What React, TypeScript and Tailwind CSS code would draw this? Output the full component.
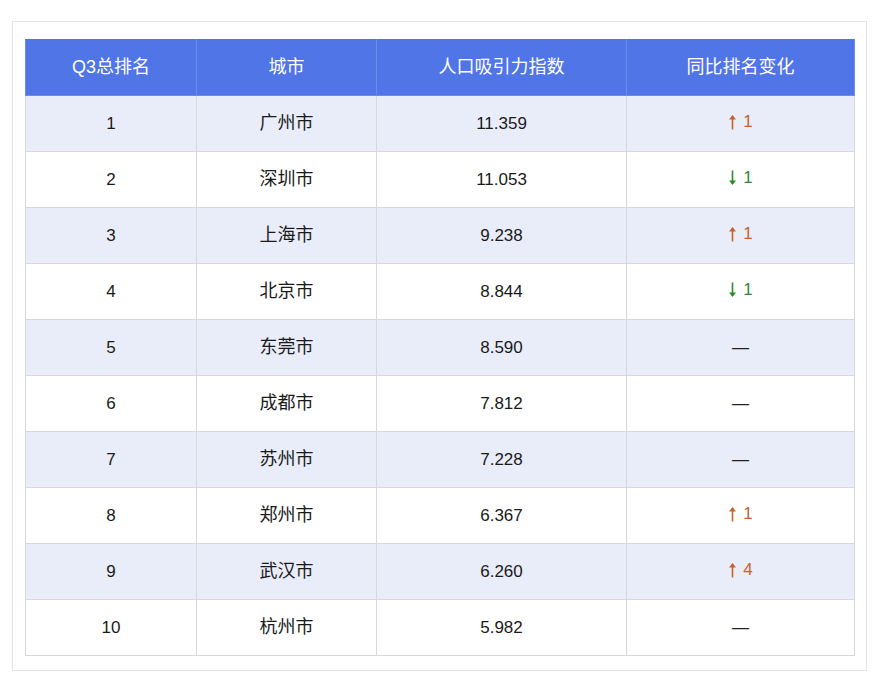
import React from 'react';

interface Row {
  rank: number;
  city: string;
  index: string;
  change: 'up' | 'down' | 'none';
  delta?: number;
}

const rows: Row[] = [
  { rank: 1, city: '广州市', index: '11.359', change: 'up', delta: 1 },
  { rank: 2, city: '深圳市', index: '11.053', change: 'down', delta: 1 },
  { rank: 3, city: '上海市', index: '9.238', change: 'up', delta: 1 },
  { rank: 4, city: '北京市', index: '8.844', change: 'down', delta: 1 },
  { rank: 5, city: '东莞市', index: '8.590', change: 'none' },
  { rank: 6, city: '成都市', index: '7.812', change: 'none' },
  { rank: 7, city: '苏州市', index: '7.228', change: 'none' },
  { rank: 8, city: '郑州市', index: '6.367', change: 'up', delta: 1 },
  { rank: 9, city: '武汉市', index: '6.260', change: 'up', delta: 4 },
  { rank: 10, city: '杭州市', index: '5.982', change: 'none' },
];

const headers = ['Q3总排名', '城市', '人口吸引力指数', '同比排名变化'];
const colWidths = ['w-[171px]', 'w-[180px]', 'w-[250px]', 'w-[228px]'];

// thin arrow, drawn so it matches the tall glyph in the picture
const Arrow: React.FC<{ up: boolean }> = ({ up }) => (
  <svg width="9" height="16" viewBox="0 0 9 16" className={up ? '' : 'rotate-180'}>
    <path d="M4.5 15.5V2" stroke="currentColor" strokeWidth="1.6" fill="none" />
    <path d="M1 5.5L4.5 1L8 5.5Z" fill="currentColor" />
  </svg>
);

const ChangeCell: React.FC<{ row: Row }> = ({ row }) => {
  if (row.change === 'none') {
    return <span className="text-[#222]">—</span>;
  }
  const up = row.change === 'up';
  return (
    <span
      className={`inline-flex items-center gap-[6px] ${
        up ? 'text-[#c4622d]' : 'text-[#2f8a2f]'
      }`}
    >
      <Arrow up={up} />
      <span>{row.delta}</span>
    </span>
  );
};

const App: React.FC = () => {
  return (
    <div
      className="w-[880px] h-[688px] bg-white pt-[21px] pl-[12px]"
      style={{ fontFamily: '"Liberation Sans", "Noto Sans CJK SC", sans-serif' }}
    >
      <div className="w-[855px] h-[650px] border border-[#e3e3e3] pt-[17px] pl-[12px]">
        <table className="border-collapse table-fixed w-[830px]">
          <thead>
            <tr className="bg-[#4f75e6] text-white h-[56px]">
              {headers.map((h, i) => (
                <th
                  key={h}
                  className={`${colWidths[i]} font-normal text-[18px] border border-[#6c8bea] border-t-[#4f75e6] p-0`}
                >
                  {h}
                </th>
              ))}
            </tr>
          </thead>
          <tbody>
            {rows.map((row, idx) => (
              <tr
                key={row.rank}
                className={`h-[56px] text-[17px] text-[#1a1a1a] ${
                  idx % 2 === 0 ? 'bg-[#e9edf9]' : 'bg-white'
                }`}
              >
                <td className="border border-[#d8d8d8] text-center p-0">{row.rank}</td>
                <td className="border border-[#d8d8d8] text-center p-0 text-[18px]">{row.city}</td>
                <td className="border border-[#d8d8d8] text-center p-0">{row.index}</td>
                <td className="border border-[#d8d8d8] text-center p-0">
                  <ChangeCell row={row} />
                </td>
              </tr>
            ))}
          </tbody>
        </table>
      </div>
    </div>
  );
};

export default App;
